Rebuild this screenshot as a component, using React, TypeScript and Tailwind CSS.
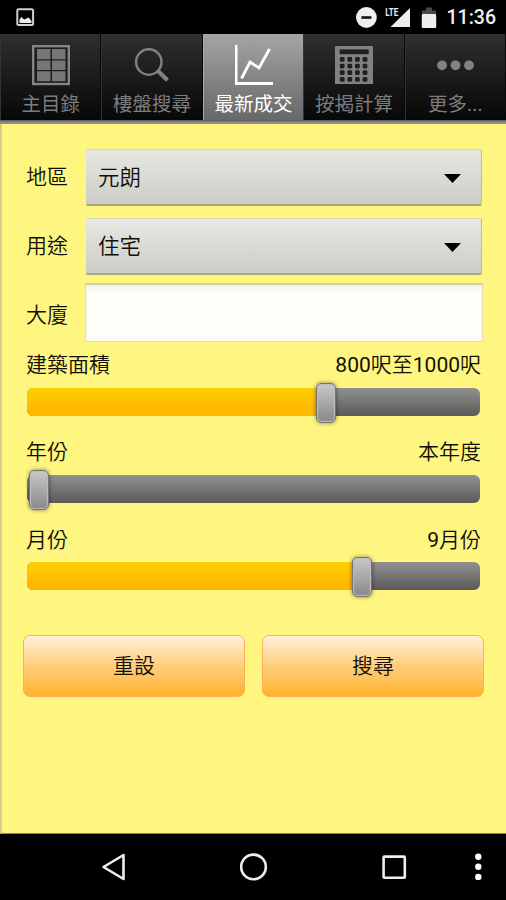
import type { ReactNode } from "react";

const GridIcon = () => (
  <svg width="38" height="41" viewBox="0 0 38 41">
    <rect x="1.2" y="1.2" width="35.6" height="37.8" fill="#1c1c1c" stroke="#858585" strokeWidth="2.4" />
    <g fill="#777">
      <rect x="5" y="4" width="13.5" height="10.3" />
      <rect x="20" y="4" width="13.5" height="10.3" />
      <rect x="5" y="15.5" width="13.5" height="9.5" />
      <rect x="20" y="15.5" width="13.5" height="9.5" />
      <rect x="5" y="26.2" width="13.5" height="10" />
      <rect x="20" y="26.2" width="13.5" height="10" />
    </g>
  </svg>
);

const SearchIcon = () => (
  <svg width="38" height="41" viewBox="0 0 38 41" fill="none" stroke="#828282">
    <circle cx="15.8" cy="17" r="12.7" strokeWidth="2.4" />
    <path d="M24.5 25.5L34.5 35.3" strokeWidth="4.2" />
  </svg>
);

const ChartIcon = () => (
  <svg width="38" height="41" viewBox="0 0 38 41" fill="none" stroke="#fff">
    <path d="M1 0V38.5H38.5" strokeWidth="3" />
    <path d="M6.5 33.5L15 17L24 23L34.5 4" strokeWidth="2.8" />
  </svg>
);

const CalcIcon = () => (
  <svg width="38" height="41" viewBox="0 0 38 41">
    <rect x="0" y="1" width="38" height="38" fill="#818181" />
    <rect x="4.7" y="4.4" width="29" height="4.8" fill="#202020" />
    {[12, 18.7, 25.2, 32].map((y) =>
      [4.8, 12.4, 20, 27.6].map((x) => <rect key={`${x}-${y}`} x={x} y={y} width="4.8" height="4.8" rx="1.4" fill="#202020" />),
    )}
  </svg>
);

const MoreIcon = () => (
  <svg width="38" height="41" viewBox="0 0 38 41" fill="#828282">
    <circle cx="6" cy="20.3" r="4.9" />
    <circle cx="19.5" cy="20.3" r="4.9" />
    <circle cx="33" cy="20.3" r="4.9" />
  </svg>
);

function Tab({ icon, label, active = false }: { icon: ReactNode; label: string; active?: boolean }) {
  return (
    <div
      className={
        active
          ? "flex h-full flex-1 flex-col items-center border-l border-[#aaa] bg-linear-to-b from-[#a5a5a5] to-[#686868] pt-[11px] text-white"
          : "flex h-full flex-1 flex-col items-center border-r border-l border-l-[#333] border-r-[#080808] bg-linear-to-b from-[#303030] to-[#080808] pt-[11px] text-[#7c7c7c]"
      }
    >
      {icon}
      <span className="mt-[6px] text-[19.5px] leading-[26px] whitespace-nowrap">{label}</span>
    </div>
  );
}

function Spinner({ label, value }: { label: string; value: string }) {
  return (
    <div className="flex h-[57px] items-center">
      <span className="w-[60px] shrink-0">{label}</span>
      <div className="flex h-full w-[396px] items-center justify-between rounded-[2px] border-t border-r border-b-2 border-t-[#d9d6b5] border-r-[#c0b9a5] border-b-[#aaa67f] bg-linear-to-b from-[#e8e8e3] to-[#cdcdc8] pr-5 pl-[12px] text-[21.5px]">
        <span className="pt-[2px]">{value}</span>
        <svg width="17" height="9" viewBox="0 0 17 9" className="mt-0.5">
          <path d="M0 0H17L8.5 9Z" />
        </svg>
      </div>
    </div>
  );
}

function SliderRow({ label, value, thumb }: { label: string; value: ReactNode; thumb: number }) {
  return (
    <div className="h-[87.2px]">
      <div className="flex h-[30px] w-[455px] items-center justify-between">
        <span>{label}</span>
        <span>{value}</span>
      </div>
      <div className="relative mt-[7px] ml-[1px] h-[28px] w-[453px] overflow-visible rounded-[6px] bg-linear-to-b from-[#919290] to-[#5a5b58]">
        {thumb > 12 && (
          <div className="h-full rounded-l-[6px] bg-linear-to-b from-[#ffcf00] via-[#ffb800] via-75% to-[#ffb800]" style={{ width: thumb }} />
        )}
        <div
          className="absolute -top-[5px] h-[40px] w-[20px] -translate-x-1/2 rounded-[5px] border border-[#747474] bg-linear-to-b from-[#c9c9c9] to-[#888] shadow-[0_0_4px_#0007,inset_0_0_1px_1px_#bdbdbd]"
          style={{ left: thumb }}
        />
      </div>
    </div>
  );
}

const Num = ({ children }: { children: ReactNode }) => <span className="font-normal">{children}</span>;

function ActionButton({ label }: { label: string }) {
  return (
    <button className="h-[62px] w-[222px] rounded-[7px] border border-[#ffae55] bg-linear-to-b from-[#fff1d9] via-[#ffce78] via-50% to-[#ffb222] pt-0.5 text-[21px]">
      {label}
    </button>
  );
}

export default function App() {
  return (
    <div className="flex h-[900px] w-[506px] flex-col overflow-hidden bg-black font-[Roboto,'Noto_Sans_CJK_TC',sans-serif] text-[21px] text-[#100f06]">
      <header className="flex h-[34px] shrink-0 items-center justify-between pr-[10px] pl-[16px]">
        <svg width="19" height="19" viewBox="0 0 19 19">
          <rect x="1.3" y="1.3" width="15.8" height="15.8" rx="1.5" fill="none" stroke="#d0d0d0" strokeWidth="2" />
          <path d="M3.5 15V11.5L5.5 9L8 11.5L9.5 11L12.5 9.5L15.5 13V15Z" fill="#eee" />
        </svg>
        <div className="flex items-center">
          <svg width="84" height="26" viewBox="0 0 84 26" fill="#eee">
            <circle cx="10.4" cy="13.5" r="10.4" />
            <rect x="5.4" y="12.2" width="10" height="2.6" fill="#111" />
            <path d="M54 4V23H34.5Z" />
            <rect x="29" y="3" width="14" height="10" fill="#000" />
            <text x="29.2" y="12" fontSize="11.5" fontWeight="700" textLength="13" lengthAdjust="spacingAndGlyphs">LTE</text>
            <path d="M66 6.5H70V3.5H76V6.5H80V10H66Z" fill="#484848" />
            <rect x="65.8" y="10" width="14.4" height="14" rx="1" />
          </svg>
          <span className="w-[56px] pt-0.5 text-right text-[19.5px] leading-none font-medium text-[#eee]">11:36</span>
        </div>
      </header>

      <nav className="flex h-[86px] shrink-0">
        <Tab icon={<GridIcon />} label="主目錄" />
        <Tab icon={<SearchIcon />} label="樓盤搜尋" />
        <Tab icon={<ChartIcon />} label="最新成交" active />
        <Tab icon={<CalcIcon />} label="按揭計算" />
        <Tab icon={<MoreIcon />} label="更多..." />
      </nav>
      <div className="h-1 shrink-0 bg-linear-to-b from-[#555] via-[#888] to-[#9a9872]" />

      <main className="flex h-[710px] shrink-0 flex-col border-b border-l-2 border-b-[#8f8b43] border-l-[#d5cf8f] bg-[#fff581] pt-[25px] pl-[24px] font-[350]">
        <div className="flex flex-col gap-3">
          <Spinner label="地區" value="元朗" />
          <Spinner label="用途" value="住宅" />
        </div>
        <div className="mt-[8px] flex h-[59px] items-center">
          <span className="w-[59px] shrink-0 pt-1.5">大廈</span>
          <input
            aria-label="大廈"
            className="h-full w-[398px] border border-t-2 border-[#e5dfab] border-t-[#d3cf9d] bg-[#fffffa] px-2 shadow-[inset_0_5px_5px_#f2f2ee] outline-none"
          />
        </div>
        <section className="mt-[9px]">
          <SliderRow label="建築面積" value={<><Num>800</Num>呎至<Num>1000</Num>呎</>} thumb={299} />
          <SliderRow label="年份" value="本年度" thumb={12} />
          <SliderRow label="月份" value={<><Num>9</Num>月份</>} thumb={335} />
        </section>
        <div className="-ml-[3px] mt-[22px] flex gap-[17px]">
          <ActionButton label="重設" />
          <ActionButton label="搜尋" />
        </div>
      </main>

      <footer className="flex flex-1 items-center">
        <svg width="506" height="66" viewBox="0 0 506 66" fill="none" stroke="#eee" strokeWidth="2.6">
          <path d="M123.5 21V45L103.5 33Z" strokeLinejoin="round" />
          <circle cx="253.5" cy="32.9" r="12.3" />
          <rect x="383.6" y="22.6" width="21.2" height="21.2" rx="0.8" />
          <g fill="#fff" stroke="none">
            <circle cx="478.3" cy="22.7" r="3.2" />
            <circle cx="478.3" cy="32.8" r="3.2" />
            <circle cx="478.3" cy="42.9" r="3.2" />
          </g>
        </svg>
      </footer>
    </div>
  );
}
